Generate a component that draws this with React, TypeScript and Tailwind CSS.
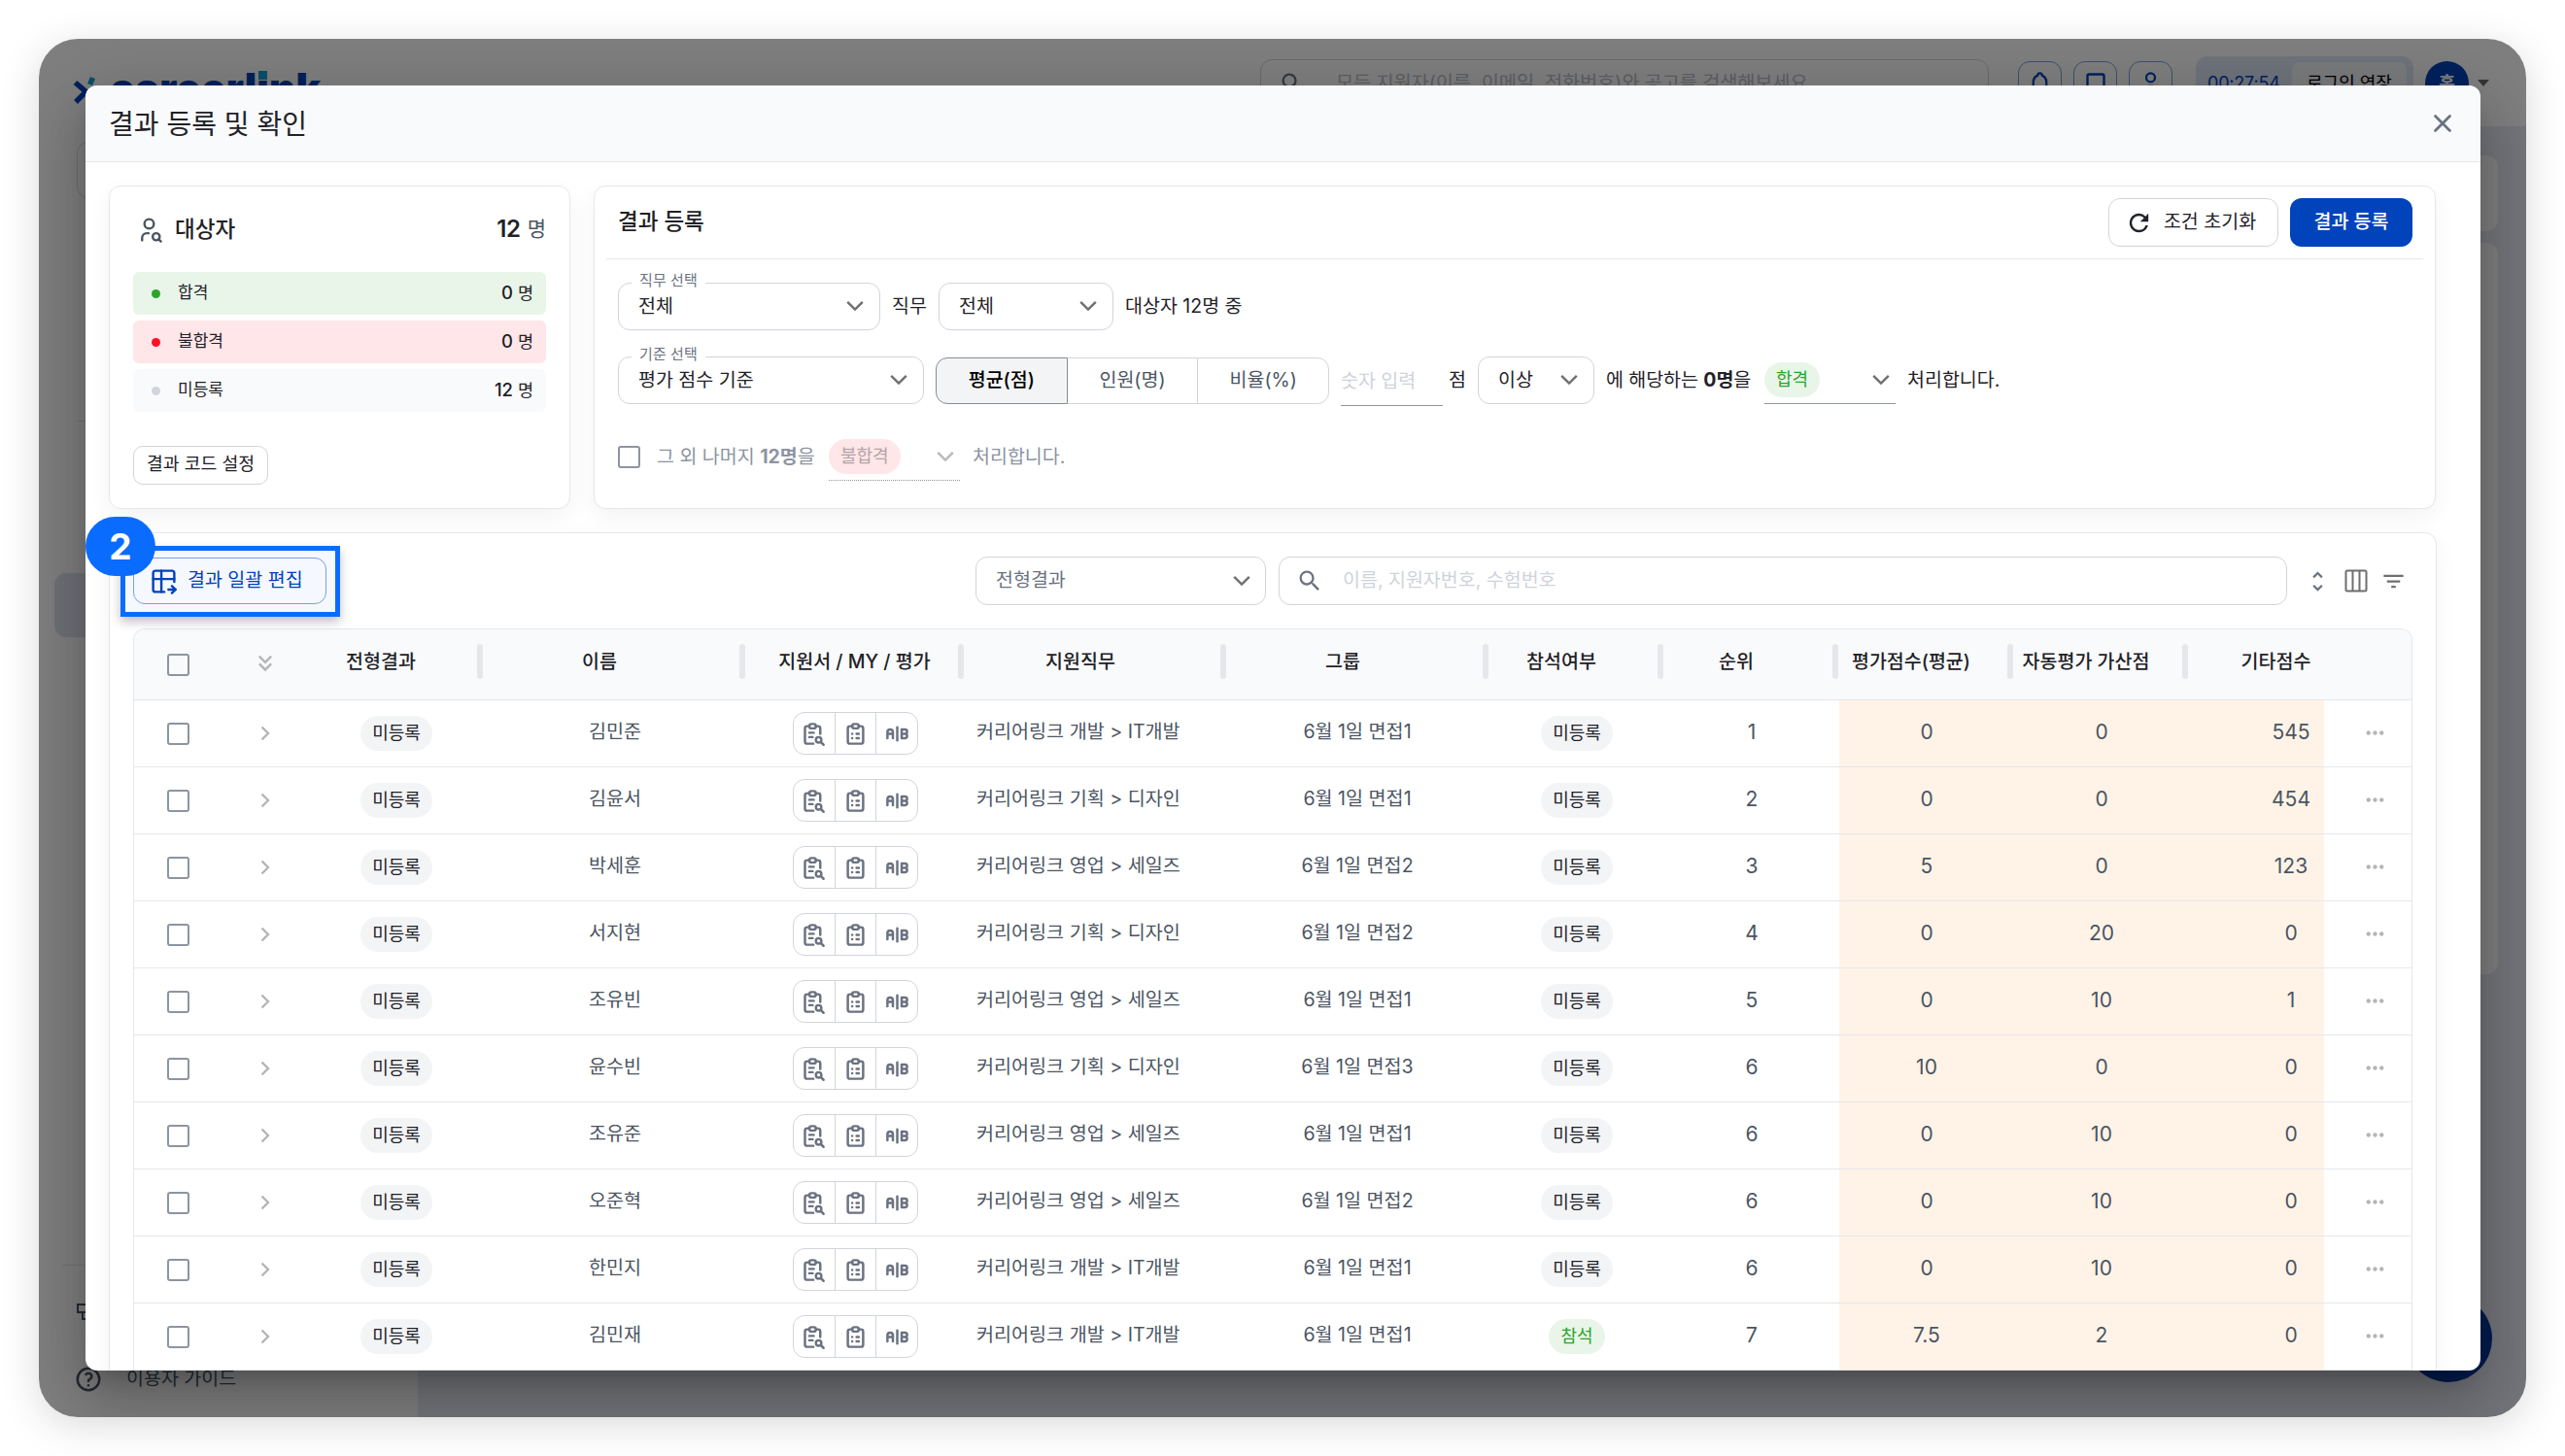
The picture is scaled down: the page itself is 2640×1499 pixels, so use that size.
import type { ReactNode } from "react";
import {
    MdFilterList,
    MdKeyboardDoubleArrowDown,
    MdMoreHoriz,
    MdRefresh,
    MdSearch,
    MdUnfoldMore,
} from "react-icons/md";
import {
    TbAB,
    TbBell,
    TbClipboardList,
    TbHelp,
    TbReportSearch,
    TbTableExport,
    TbUser,
    TbUserSearch,
    TbX,
} from "react-icons/tb";

type Applicant = {
    name: string;
    job: string;
    group: string;
    attend: string;
    rank: string;
    scores: [string, string, string];
};

const DEV = "커리어링크 개발 > IT개발";
const DESIGN = "커리어링크 기획 > 디자인";
const SALES = "커리어링크 영업 > 세일즈";

const applicants: Applicant[] = [
    { name: "김민준", job: DEV, group: "6월 1일 면접1", attend: "미등록", rank: "1", scores: ["0", "0", "545"] },
    { name: "김윤서", job: DESIGN, group: "6월 1일 면접1", attend: "미등록", rank: "2", scores: ["0", "0", "454"] },
    { name: "박세훈", job: SALES, group: "6월 1일 면접2", attend: "미등록", rank: "3", scores: ["5", "0", "123"] },
    { name: "서지현", job: DESIGN, group: "6월 1일 면접2", attend: "미등록", rank: "4", scores: ["0", "20", "0"] },
    { name: "조유빈", job: SALES, group: "6월 1일 면접1", attend: "미등록", rank: "5", scores: ["0", "10", "1"] },
    { name: "윤수빈", job: DESIGN, group: "6월 1일 면접3", attend: "미등록", rank: "6", scores: ["10", "0", "0"] },
    { name: "조유준", job: SALES, group: "6월 1일 면접1", attend: "미등록", rank: "6", scores: ["0", "10", "0"] },
    { name: "오준혁", job: SALES, group: "6월 1일 면접2", attend: "미등록", rank: "6", scores: ["0", "10", "0"] },
    { name: "한민지", job: DEV, group: "6월 1일 면접1", attend: "미등록", rank: "6", scores: ["0", "10", "0"] },
    { name: "김민재", job: DEV, group: "6월 1일 면접1", attend: "참석", rank: "7", scores: ["7.5", "2", "0"] },
];

const summary = [
    { label: "합격", count: "0", row: "bg-[#e9f5e9]", dot: "bg-[#2aa52a]" },
    { label: "불합격", count: "0", row: "bg-[#ffe6e8]", dot: "bg-[#ff1225]" },
    { label: "미등록", count: "12", row: "bg-[#f9fafc]", dot: "bg-[#d1d5db]" },
];

const COLS =
    "grid grid-cols-[90px_90px_180px_270px_225px_270px_270px_180px_180px_180px_180px_139px_90px]";

function Chevron({ className = "text-[#6f6f6f]" }: { className?: string }) {
    return (
        <svg width="18" height="12" viewBox="0 0 18 12" fill="none" className={`mb-px shrink-0 ${className}`}>
            <path d="M1.2 1.8 9 9.6l7.8-7.8" stroke="currentColor" strokeWidth="2.4" />
        </svg>
    );
}

function Checkbox() {
    return <span className="block size-[23px] shrink-0 rounded-[3px] border-2 border-[#8d94a1]" />;
}

function Select({ label, value, className }: { label?: string; value: string; className: string }) {
    return (
        <div
            className={`relative flex h-[49px] shrink-0 items-center justify-between rounded-xl border border-[#d1d5db] pl-5 pr-4 ${className}`}
        >
            {label && (
                <span className="absolute -top-[14px] left-[13px] bg-white px-[8px] text-[15px] leading-[22px] tracking-[0.1px] text-[#6b7280]">
                    {label}
                </span>
            )}
            <span>{value}</span>
            <Chevron />
        </div>
    );
}

function Chip({ children, className }: { children: ReactNode; className: string }) {
    return (
        <span className={`flex h-9 items-center rounded-full px-3 text-[18px] ${className}`}>
            <span className="-mt-[2px]">{children}</span>
        </span>
    );
}

// Page that stays dimmed behind the dialog
function Backdrop() {
    return (
        <div className="flex h-full flex-col bg-white">
            <header className="flex h-[90px] shrink-0 items-start">
                <div className="flex pl-[35px] pt-[32px]">
                    <svg width="34" height="38" viewBox="0 0 34 38" fill="none">
                        <path d="M2.5 13l11 9.5L3 33" stroke="#0043bb" strokeWidth="5.5" />
                        <path d="M20.5 8l-3 7" stroke="#16a0d8" strokeWidth="5.5" />
                    </svg>
                    <span className="ml-[4px] text-[42px] font-black leading-[38px] tracking-[0.2px] text-[#0043bb]">
                        careerl
                        <span className="relative">
                            i
                            <span className="absolute left-[2px] top-[8px] h-[9px] w-[9px] bg-[#16a0d8]" />
                        </span>
                        nk
                    </span>
                </div>
                <div className="ml-auto mt-[21px] flex h-[50px] w-[750px] items-center rounded-xl border border-[#d1d5db] pl-[18px] text-[19.8px] tracking-[-0.15px] text-[#bcc0c8]">
                    <MdSearch className="mr-[31px] size-[28px] text-[#6b7280]" />
                    모든 지원자(이름, 이메일, 전화번호)와 공고를 검색해보세요
                </div>
                <div className="ml-[30px] mt-[23px] flex gap-[12px] text-[#0043bb]">
                    <span className="flex size-[45px] items-center justify-center rounded-xl border border-[#7a9fe0]">
                        <TbBell className="size-[27px]" />
                    </span>
                    <span className="flex size-[45px] items-center justify-center rounded-xl border border-[#7a9fe0]">
                        <svg width="20" height="22" viewBox="0 0 20 22" fill="none" stroke="currentColor" strokeWidth="2.4">
                            <rect x="1.5" y="1.5" width="17" height="19" rx="1.5" />
                        </svg>
                    </span>
                    <span className="flex size-[45px] items-center justify-center rounded-xl border border-[#7a9fe0]">
                        <TbUser className="size-[27px]" />
                    </span>
                </div>
                <div className="ml-[24px] mt-[18px] flex h-[54px] w-[224px] items-center justify-between rounded-xl bg-[#dfe6f7] pl-[12px] pr-[7px] text-[18px]">
                    <span className="tracking-[-0.2px] text-[#0043bb]">00:27:54</span>
                    <span className="flex h-[42px] w-[118px] items-center justify-center rounded-lg bg-[#f4f6fb] text-black">
                        로그인 연장
                    </span>
                </div>
                <div className="ml-[12px] mt-[23px] flex size-[45px] items-center justify-center rounded-full bg-[#0043bb] text-[18px] font-bold text-white">
                    홍
                </div>
                <span className="ml-[9px] mr-[38px] mt-[42px] border-x-[6px] border-t-[7px] border-x-transparent border-t-[#6b6b6b]" />
            </header>
            <div className="flex min-h-0 flex-1">
                <aside className="flex w-[390px] shrink-0 flex-col text-[#4b5563]">
                    <div className="ml-[39px] mt-[16px] h-[58px] rounded-xl border border-[#d9dce2]" />
                    <div className="ml-[40px] mt-[229px] h-px bg-[#e5e7eb]" />
                    <div className="ml-[16px] mt-[156px] h-[66px] rounded-xl bg-[#dfe2f0]" />
                    <div className="ml-[24px] mt-[646px] h-px bg-[#e5e7eb]" />
                    <div className="ml-[38px] mt-[38px] h-[22px]">
                        <svg width="24" height="22" viewBox="0 0 24 22" fill="none" stroke="currentColor" strokeWidth="2">
                            <path d="M2 2h20v8H2zM7 10v7h10" />
                        </svg>
                    </div>
                    <div className="ml-[36px] mt-[42px] flex items-center text-[19.5px]">
                        <TbHelp className="mr-[24px] size-[30px]" />
                        이용자 가이드
                    </div>
                </aside>
                <section className="flex flex-1 flex-col gap-[12px] bg-[#e9ebf4] pl-[30px] pr-[29px] pt-[30px]">
                    <div className="h-[78px] rounded-xl bg-white" />
                    <div className="h-[753px] rounded-xl bg-white" />
                </section>
            </div>
        </div>
    );
}

function SummaryCard() {
    return (
        <section className="flex h-[333px] w-[475px] shrink-0 flex-col items-start rounded-xl border border-[#e5e7eb] bg-white px-6 shadow-[0_8px_24px_rgba(0,0,0,0.05)]">
            <div className="mt-[28px] flex h-[32px] w-full items-center text-[22.5px] font-medium">
                <TbUserSearch className="ml-[2px] mr-[12px] size-[29px] text-[#4b5563]" strokeWidth={2} />
                <span>대상자</span>
                <span className="ml-auto text-[24px] font-semibold tracking-[-0.4px]">12</span>
                <span className="ml-[7px] text-[21px] font-normal text-[#4b5563]">명</span>
            </div>
            <ul className="mt-[28px] flex w-full flex-col gap-[6px]">
                {summary.map((s) => (
                    <li
                        key={s.label}
                        className={`flex h-[44px] items-center rounded-md pl-[19px] pr-[13px] text-[17px] ${s.row}`}
                    >
                        <span className={`mr-[18px] size-[9px] rounded-full ${s.dot}`} />
                        <span>{s.label}</span>
                        <span className="ml-auto text-[18.5px] font-medium">
                            {s.count} <span className="text-[17.5px] font-normal">명</span>
                        </span>
                    </li>
                ))}
            </ul>
            <button className="mt-[35px] h-[40px] w-[139px] rounded-[10px] border border-[#d1d5db] pb-[2px] text-[18.3px]">
                결과 코드 설정
            </button>
        </section>
    );
}

function RegisterCard() {
    return (
        <section className="h-[333px] w-[1896px] rounded-xl border border-[#e5e7eb] bg-white px-3 text-[19.5px] shadow-[0_8px_24px_rgba(0,0,0,0.05)]">
            <div className="flex h-[75px] items-center border-b border-[#e5e7eb] px-3">
                <h2 className="-mt-[2px] text-[22.5px] font-medium">결과 등록</h2>
                <button className="ml-auto flex h-[50px] w-[175px] items-center justify-center rounded-xl border border-[#d1d5db] pr-[6px] text-[19.5px]">
                    <MdRefresh className="mr-[11px] size-[29px]" />
                    <span>조건 초기화</span>
                </button>
                <button className="ml-[12px] -mr-px h-[50px] w-[126px] rounded-xl bg-[#0043bb] text-[19.5px] font-medium text-white">
                    결과 등록
                </button>
            </div>
            <div className="mt-[24px] flex items-center pl-3">
                <Select label="직무 선택" value="전체" className="w-[270px]" />
                <span className="ml-[12px] w-[48px] whitespace-nowrap">직무</span>
                <Select value="전체" className="w-[180px]" />
                <span className="ml-[12px]">대상자 12명 중</span>
            </div>
            <div className="mt-[27px] flex h-[49px] items-center pl-3">
                <Select label="기준 선택" value="평가 점수 기준" className="w-[315px]" />
                <div className="ml-[12px] flex h-[48px] w-[405px] shrink-0 text-[#4b5563]">
                    <span className="flex flex-1 items-center justify-center rounded-l-xl border border-[#868c97] bg-[#f3f4f6] font-medium text-black">
                        평균(점)
                    </span>
                    <span className="flex flex-1 items-center justify-center border-y border-[#d1d5db]">
                        인원(명)
                    </span>
                    <span className="flex flex-1 items-center justify-center rounded-r-xl border border-[#d1d5db]">
                        비율(%)
                    </span>
                </div>
                <span className="ml-[12px] mt-[4px] h-[48px] w-[105px] shrink-0 border-b border-[#8f949e] leading-[45px] text-[#cfd3da]">
                    숫자 입력
                </span>
                <span className="ml-[6px] w-[30px]">점</span>
                <Select value="이상" className="w-[120px]" />
                <span className="ml-[12px] w-[163px] whitespace-nowrap tracking-[-0.05px]">
                    에 해당하는 <b className="font-bold">0명</b>을
                </span>
                <div className="flex h-[49px] w-[135px] shrink-0 items-center justify-between border-b border-[#8f949e] pr-[6px]">
                    <Chip className="bg-[#e9f5e9] text-[#2aa52a]">합격</Chip>
                    <Chevron />
                </div>
                <span className="ml-[12px]">처리합니다.</span>
            </div>
            <div className="mt-[30px] flex h-[49px] items-center pl-3 text-[#8d94a1]">
                <Checkbox />
                <span className="ml-[17px] w-[177px] whitespace-nowrap">
                    그 외 나머지 <b className="font-bold">12명</b>을
                </span>
                <div className="flex h-[49px] w-[135px] shrink-0 items-center justify-between border-b border-dotted border-[#8f949e] pr-[6px]">
                    <Chip className="bg-[#ffe6e8] text-[#b3a3a7]">불합격</Chip>
                    <Chevron className="text-[#b9b9b9]" />
                </div>
                <span className="ml-[13px]">처리합니다.</span>
            </div>
        </section>
    );
}

function Toolbar() {
    return (
        <div className="flex h-[98px] items-center">
            <div className="relative">
                {/* numbered guide marker around the bulk edit button */}
                <div className="absolute -left-[13px] -top-[12px] h-[73px] w-[226px] border-[5px] border-[#0a6cff] bg-[#f5f8ff] shadow-[0_5px_10px_rgba(0,0,0,0.25)]" />
                <button className="relative flex h-[48px] w-[199px] items-center rounded-xl border border-[#7a9fe0] bg-[#f5f8ff] pl-[16px] text-[19.5px] text-[#0043bb]">
                    <TbTableExport className="mr-[10px] size-[29px]" strokeWidth={2} />
                    <span className="whitespace-nowrap">결과 일괄 편집</span>
                </button>
                <span className="absolute -left-[49px] -top-[42px] flex h-[61px] w-[72px] items-center justify-center rounded-[31px] bg-[#0a6cff] text-[37px] font-bold text-white">
                    2
                </span>
            </div>
            <div className="ml-auto flex h-[50px] w-[299px] items-center justify-between rounded-xl border border-[#d1d5db] pl-5 pr-[15px] text-[19.5px] text-[#6b7280]">
                <span>전형결과</span>
                <Chevron />
            </div>
            <div className="ml-[13px] flex h-[50px] w-[1038px] items-center rounded-xl border border-[#d1d5db] pl-[17px] text-[19.5px] text-[#cfd3da]">
                <MdSearch className="mr-[20px] size-[28px] text-[#6b7280]" />
                <span>이름, 지원자번호, 수험번호</span>
            </div>
            <div className="ml-[18px] mr-[6px] flex items-center text-[#6f6f6f]">
                <MdUnfoldMore className="size-[27px] text-[#6b7280]" />
                <svg width="24" height="24" viewBox="0 0 24 24" fill="none" className="ml-[14px]" stroke="currentColor" strokeWidth="2">
                    <rect x="1.5" y="1.5" width="21" height="21" rx="1.5" />
                    <path d="M8.5 2v20M15.5 2v20" />
                </svg>
                <MdFilterList className="ml-[13px] size-[27px]" />
            </div>
        </div>
    );
}

function HeadCell({ children, className = "pr-[32px]" }: { children: string; className?: string }) {
    return (
        <div className={`relative flex items-center justify-center whitespace-nowrap pb-[4px] ${className}`}>
            {children}
            <i className="absolute right-[1px] top-[15px] h-9 w-[6px] rounded-full bg-[#e5e7eb]" />
        </div>
    );
}

function ResultTable() {
    return (
        <div className="w-[2346px] overflow-hidden rounded-t-xl border border-b-0 border-[#e5e7eb]">
            <div className={`h-[73px] border-b border-[#e5e7eb] bg-[#f9fafc] text-[19.5px] font-medium ${COLS}`}>
                <div className="flex items-center justify-center">
                    <Checkbox />
                </div>
                <div className="flex items-center justify-center pb-[2px] text-[#b5b5b5]">
                    <MdKeyboardDoubleArrowDown className="size-[28px]" />
                </div>
                <HeadCell>전형결과</HeadCell>
                <HeadCell>이름</HeadCell>
                <HeadCell className="pr-[2px]">지원서 / MY / 평가</HeadCell>
                <HeadCell>지원직무</HeadCell>
                <HeadCell>그룹</HeadCell>
                <HeadCell>참석여부</HeadCell>
                <HeadCell>순위</HeadCell>
                <HeadCell>평가점수(평균)</HeadCell>
                <HeadCell>자동평가 가산점</HeadCell>
                <div className="flex items-center justify-center pb-[4px] pl-[40px]">기타점수</div>
                <div />
            </div>
            {applicants.map((a) => (
                <div key={a.name} className={`h-[69px] border-b border-[#e5e7eb] text-[19.6px] text-[#4b5563] ${COLS}`}>
                    <div className="flex items-center justify-center">
                        <Checkbox />
                    </div>
                    <div className="flex items-center justify-center text-[#b5b5b5]">
                        <svg width="10" height="16" viewBox="0 0 10 16" fill="none">
                            <path d="M1.5 1.5 8 8l-6.5 6.5" stroke="currentColor" strokeWidth="2.4" />
                        </svg>
                    </div>
                    <div className="flex items-center justify-center">
                        <Chip className="bg-[#f3f4f6] text-[#1f2227]">미등록</Chip>
                    </div>
                    <div className="flex items-center justify-center pb-[2px]">{a.name}</div>
                    <div className="flex items-center justify-center">
                        <div className="flex h-[44px] w-[129px] divide-x divide-[#d1d5db] rounded-xl border border-[#d1d5db] text-[#6b7280]">
                            <span className="flex flex-1 items-center justify-center">
                                <TbReportSearch className="size-[27px]" strokeWidth={2.2} />
                            </span>
                            <span className="flex flex-1 items-center justify-center">
                                <TbClipboardList className="size-[27px]" strokeWidth={2.2} />
                            </span>
                            <span className="flex flex-1 items-center justify-center">
                                <TbAB className="size-[27px]" strokeWidth={2.2} />
                            </span>
                        </div>
                    </div>
                    <div className="flex items-center whitespace-nowrap pb-[2px] pl-3">{a.job}</div>
                    <div className="flex items-center justify-center pb-[2px] pr-[2px]">{a.group}</div>
                    <div className="flex items-center justify-center">
                        <Chip
                            className={
                                a.attend === "참석" ? "bg-[#e9f5e9] text-[#2aa52a]" : "bg-[#f3f4f6] text-[#1f2227]"
                            }
                        >
                            {a.attend}
                        </Chip>
                    </div>
                    <div className="flex items-center justify-center pb-[2px] text-[21px]">{a.rank}</div>
                    <div className="flex items-center justify-center bg-[#fff3e7] pb-[2px] text-[21px]">{a.scores[0]}</div>
                    <div className="flex items-center justify-center bg-[#fff3e7] pb-[2px] text-[21px]">{a.scores[1]}</div>
                    <div className="flex items-center justify-center bg-[#fff3e7] pb-[2px] pl-[71px] text-[21px]">
                        {a.scores[2]}
                    </div>
                    <div className="flex items-center justify-center pb-[2px] pl-[15px] text-[#b5b5b5]">
                        <MdMoreHoriz className="size-[27px]" />
                    </div>
                </div>
            ))}
        </div>
    );
}

export default function App() {
    return (
        <main className="h-[1499px] w-[2640px] overflow-hidden bg-white p-10 font-['Inter','Noto_Sans_CJK_KR',sans-serif] text-[#1f2227]">
            <div className="relative h-[1419px] w-[2560px] overflow-hidden rounded-[40px] shadow-[0_8px_40px_rgba(0,0,0,0.15)]">
                <Backdrop />
                {/* chat launcher */}
                <div className="absolute bottom-[36px] right-[35px] size-[90px] rounded-full bg-[#00399f]" />
                <div className="absolute inset-0 bg-black/50" />

                <div
                    role="dialog"
                    className="absolute left-[48px] top-[48px] flex h-[1323px] w-[2465px] flex-col rounded-xl bg-white shadow-[0_16px_22px_-10px_rgba(0,0,0,0.2),0_36px_57px_4px_rgba(0,0,0,0.14),0_13px_69px_12px_rgba(0,0,0,0.12)]"
                >
                    <div className="flex h-[79px] shrink-0 items-center justify-between rounded-t-xl border-b border-[#e5e7eb] bg-[#f9fafc] pl-6 pr-[24px]">
                        <h1 className="mt-px text-[28px] leading-[34px]">결과 등록 및 확인</h1>
                        <TbX className="size-[30px] text-[#6b7280]" strokeWidth={2.2} />
                    </div>
                    <div className="flex min-h-0 flex-1 flex-col overflow-hidden rounded-b-xl pl-6 pt-6">
                        <div className="flex gap-6">
                            <SummaryCard />
                            <RegisterCard />
                        </div>
                        <section className="mt-6 w-[2396px] shrink-0 rounded-t-xl border border-[#e5e7eb] bg-white px-6 shadow-[0_8px_24px_rgba(0,0,0,0.05)]">
                            <Toolbar />
                            <ResultTable />
                        </section>
                    </div>
                </div>
            </div>
        </main>
    );
}
